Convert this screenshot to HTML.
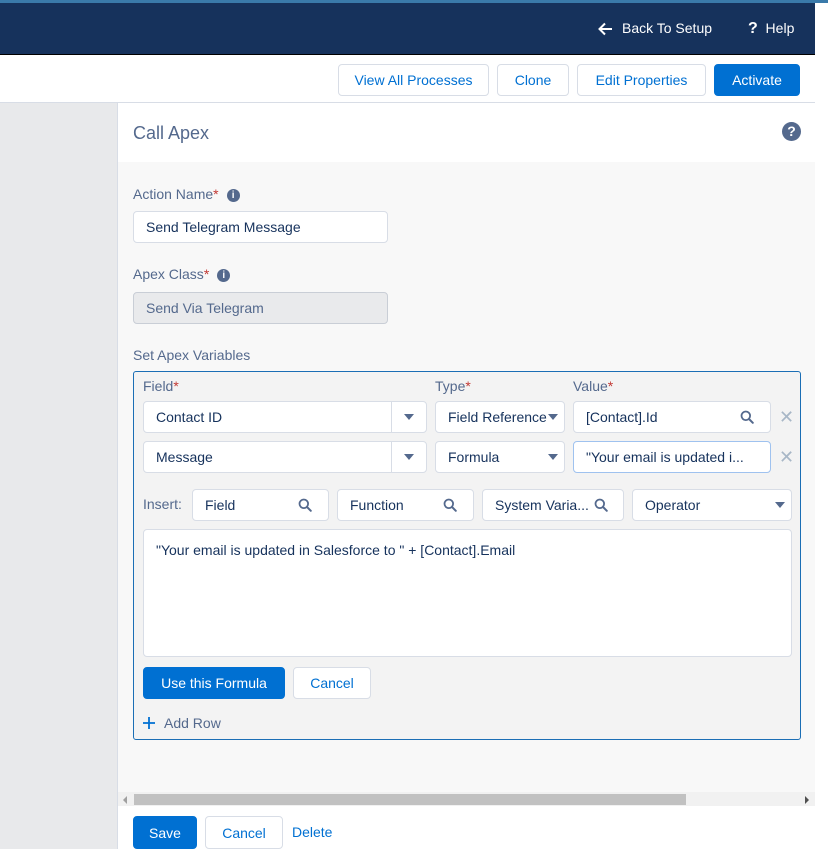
<!DOCTYPE html>
<html><head><style>
*{box-sizing:border-box;margin:0;padding:0}
body{width:828px;height:849px;overflow:hidden;background:#fff;font-family:"Liberation Sans",sans-serif;font-size:14px;color:#16325c;position:relative}
.a{position:absolute}
.btn{position:absolute;border:1px solid #d8dde6;border-radius:4px;background:#fff;color:#0070d2;font-size:14px;display:flex;align-items:center;justify-content:center}
.pri{background:#0070d2;color:#fff;border-color:#0070d2}
.in{position:absolute;background:#fff;border:1px solid #d8dde6;border-radius:4px;font-size:14px;color:#16325c;display:flex;align-items:center;padding-left:12px}
.lbl{position:absolute;font-size:14px;color:#54698d}
.req{color:#c23934}
.tri{position:absolute;width:0;height:0;border-left:5px solid transparent;border-right:5px solid transparent;border-top:6px solid #54698d}
.info{display:inline-block;width:13px;height:13px;border-radius:50%;background:#54698d;color:#fff;font-size:10px;font-weight:bold;text-align:center;line-height:13px;margin-left:8px;vertical-align:1px}
.x{position:absolute;color:#a8b7c7;font-size:18px}
.s{position:absolute;width:14px;height:14px}
</style></head><body>
<svg width="0" height="0" style="position:absolute"><defs><symbol id="mg" viewBox="0 0 14 14"><circle cx="5.8" cy="5.8" r="4.3" fill="none" stroke="#54698d" stroke-width="1.8"/><path d="M9 9l3.8 3.8" stroke="#54698d" stroke-width="2" stroke-linecap="round"/></symbol></defs></svg>
<div class="a" style="left:0;top:0;width:828px;height:3px;background:#3a7aaa"></div>
<div class="a" style="left:0;top:3px;width:815px;height:51px;background:#16325c"></div>
<div class="a" style="left:0;top:54px;width:815px;height:1px;background:#000"></div>
<svg class="a" style="left:598px;top:22px" width="15" height="14" viewBox="0 0 15 14"><path d="M14 7H2M7 1.5L1.5 7 7 12.5" fill="none" stroke="#fff" stroke-width="2"/></svg>
<div class="a" style="left:622px;top:20px;color:#fff;font-size:14px">Back To Setup</div>
<div class="a" style="left:748px;top:20px;color:#fff;font-size:14px"><b style="font-size:16px">?</b>&nbsp; Help</div>
<div class="a" style="left:0;top:102px;width:815px;height:1px;background:#d8dde6"></div>
<div class="btn" style="left:338px;top:64px;width:151px;height:32px">View All Processes</div>
<div class="btn" style="left:497px;top:64px;width:72px;height:32px">Clone</div>
<div class="btn" style="left:577px;top:64px;width:129px;height:32px">Edit Properties</div>
<div class="btn pri" style="left:714px;top:64px;width:86px;height:32px">Activate</div>
<div class="a" style="left:0;top:103px;width:117px;height:746px;background:#e8e9eb"></div>
<div class="a" style="left:117px;top:103px;width:1px;height:746px;background:#d8dde6"></div>
<div class="a" style="left:118px;top:162px;width:697px;height:630px;background:#f8f8f8"></div>
<div class="a" style="left:133px;top:123px;font-size:18px;color:#54698d">Call Apex</div>
<div class="a" style="left:782px;top:122px;width:19px;height:19px;border-radius:50%;background:#54698d;color:#fff;font-weight:bold;font-size:14px;text-align:center;line-height:19px">?</div>
<div class="lbl" style="left:133px;top:186px">Action Name<span class="req">*</span><span class="info">i</span></div>
<div class="in" style="left:133px;top:211px;width:255px;height:32px">Send Telegram Message</div>
<div class="lbl" style="left:133px;top:266px">Apex Class<span class="req">*</span><span class="info">i</span></div>
<div class="in" style="left:133px;top:292px;width:255px;height:32px;background:#e9eaec;border-color:#c9ced6;color:#54698d">Send Via Telegram</div>
<div class="lbl" style="left:133px;top:347px">Set Apex Variables</div>
<div class="a" style="left:133px;top:371px;width:668px;height:369px;background:#f3f3f3;border:1px solid #1b6eb5;border-radius:3px"></div>
<div class="lbl" style="left:143px;top:378px">Field<span class="req">*</span></div>
<div class="lbl" style="left:435px;top:378px">Type<span class="req">*</span></div>
<div class="lbl" style="left:573px;top:378px">Value<span class="req">*</span></div>
<div class="in" style="left:143px;top:401px;width:284px;height:32px">Contact ID</div>
<div class="a" style="left:391px;top:402px;width:1px;height:30px;background:#d8dde6"></div><div class="tri" style="left:404px;top:414px"></div>
<div class="in" style="left:435px;top:401px;width:130px;height:32px;white-space:nowrap;overflow:hidden">Field Reference</div><div class="tri" style="left:548px;top:414px"></div>
<div class="in" style="left:573px;top:401px;width:198px;height:32px">[Contact].Id</div>
<svg class="s" style="left:740px;top:410px"><use href="#mg"/></svg>
<div class="x" style="left:779px;top:407px">&#10005;</div>
<div class="in" style="left:143px;top:441px;width:284px;height:32px">Message</div>
<div class="a" style="left:391px;top:442px;width:1px;height:30px;background:#d8dde6"></div><div class="tri" style="left:404px;top:454px"></div>
<div class="in" style="left:435px;top:441px;width:130px;height:32px">Formula</div><div class="tri" style="left:548px;top:454px"></div>
<div class="in" style="left:573px;top:441px;width:198px;height:32px;border-color:#9fc2ef;white-space:nowrap;overflow:hidden">"Your email is updated i...</div>
<div class="x" style="left:779px;top:447px">&#10005;</div>
<div class="lbl" style="left:143px;top:496px">Insert:</div>
<div class="in" style="left:192px;top:489px;width:137px;height:32px">Field</div>
<div class="in" style="left:337px;top:489px;width:137px;height:32px">Function</div>
<div class="in" style="left:482px;top:489px;width:142px;height:32px">System Varia...</div>
<svg class="s" style="left:298px;top:498px"><use href="#mg"/></svg>
<svg class="s" style="left:443px;top:498px"><use href="#mg"/></svg>
<svg class="s" style="left:594px;top:498px"><use href="#mg"/></svg>
<div class="in" style="left:632px;top:489px;width:160px;height:32px">Operator</div><div class="tri" style="left:775px;top:502px"></div>
<div class="in" style="left:143px;top:529px;width:649px;height:128px;align-items:flex-start;padding-top:12px">"Your email is updated in Salesforce to " + [Contact].Email</div>
<div class="btn pri" style="left:143px;top:667px;width:142px;height:32px">Use this Formula</div>
<div class="btn" style="left:293px;top:667px;width:78px;height:32px">Cancel</div>
<svg class="a" style="left:142px;top:716px" width="14" height="14" viewBox="0 0 14 14"><path d="M7 1v12M1 7h12" stroke="#0070d2" stroke-width="1.8"/></svg>
<div class="a" style="left:164px;top:715px;color:#54698d">Add Row</div>
<div class="a" style="left:118px;top:792px;width:697px;height:14px;background:#f1f1f1"></div>
<div class="a" style="left:134px;top:794px;width:552px;height:11px;background:#c1c1c1"></div>
<div class="a" style="left:805px;top:796px;border-top:4px solid transparent;border-bottom:4px solid transparent;border-left:4px solid #505050"></div>
<div class="a" style="left:123px;top:796px;border-top:4px solid transparent;border-bottom:4px solid transparent;border-right:4px solid #a0a0a0"></div>
<div class="btn pri" style="left:133px;top:816px;width:64px;height:33px">Save</div>
<div class="btn" style="left:205px;top:816px;width:78px;height:33px">Cancel</div>
<div class="a" style="left:292px;top:824px;color:#0070d2">Delete</div>
</body></html>
